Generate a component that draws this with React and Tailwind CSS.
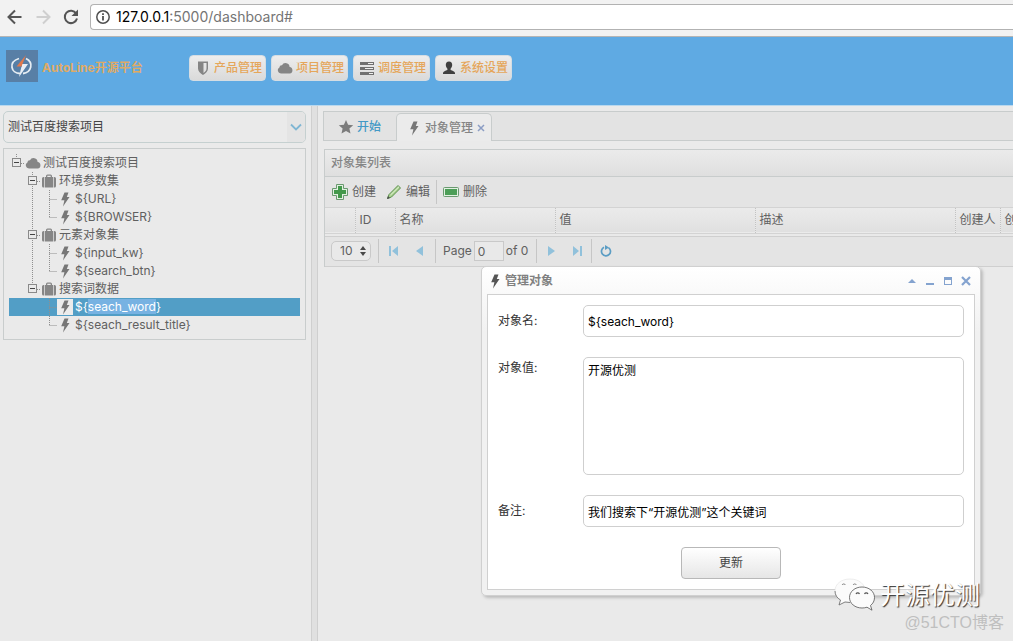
import React, { useState } from "react";

const BOLT = "M7.5 1.500h4L9.800 6H12.500L6 15.500l1.400-6.300H4.200Z";

const Bolt = ({ className = "" }) => (
  <svg viewBox="0 0 16 16" className={`size-4 shrink-0 ${className}`}>
    <path d={BOLT} fill="currentColor" />
  </svg>
);

const Cloud = ({ className = "" }) => (
  <svg viewBox="0 0 16 16" className={`size-4 shrink-0 ${className}`}>
    <path
      d="M4 13.5a3.2 3.2 0 0 1-1.6-6A2.4 2.4 0 0 1 5 5.3 4 4 0 0 1 12.6 7a3.3 3.3 0 0 1 .2 6.5Z"
      fill="currentColor"
    />
  </svg>
);

const Briefcase = () => (
  <svg viewBox="0 0 16 16" className="size-4 shrink-0 text-[#868686]">
    <path
      d="M4 4h1V3a1.500 1.500 0 0 1 1.500-1.500h3A1.500 1.500 0 0 1 11 3v1h1v10.500H4Zm2.300 0h3.400V2.800H6.300ZM3.300 4v10.500H2.500A1.500 1.500 0 0 1 1 13V5.500A1.500 1.500 0 0 1 2.500 4ZM12.700 4h.8A1.500 1.500 0 0 1 15 5.500V13a1.500 1.500 0 0 1-1.500 1.500h-.8Z"
      fill="currentColor"
      fillRule="evenodd"
    />
  </svg>
);

const Shield = () => (
  <svg viewBox="0 0 16 16" className="size-4 shrink-0 text-[#858585]">
    <path
      d="M3 1.500h10v7c0 3-2.500 5-5 6.500-2.500-1.500-5-3.500-5-6.500ZM8.500 3v10c1.800-1.200 3-2.500 3-4.500V3Z"
      fill="currentColor"
      fillRule="evenodd"
    />
  </svg>
);

const Tasks = () => (
  <svg viewBox="0 0 16 16" className="size-4 shrink-0">
    <path d="M1 2h14v3H1ZM1 7h14v3H1ZM1 12h14v3H1Z" fill="#707070" />
    <path d="M9 3h5v1H9ZM6 8h8v1H6ZM10 13h4v1h-4Z" fill="#ededed" />
  </svg>
);

const User = () => (
  <svg viewBox="0 0 16 16" className="size-4 shrink-0 text-[#404040]">
    <path
      d="M8 1.500c2.200 0 3.300 1.500 3.200 3.600C11.100 7 10.300 8 9.600 8.800v1.300c1.800.8 4.400 1.300 4.400 3V14H2v-.9c0-1.700 2.600-2.200 4.400-3V8.800C5.700 8 4.900 7 4.800 5.100 4.700 3 5.800 1.500 8 1.500Z"
      fill="currentColor"
    />
  </svg>
);

const Star = () => (
  <svg viewBox="0 0 16 16" className="size-4 shrink-0 text-[#7c7c7c]">
    <path
      d="m8 1 2.100 4.700 5.100.5-3.800 3.400 1.100 5L8 12l-4.500 2.600 1.100-5L.8 6.200l5.100-.5Z"
      fill="currentColor"
    />
  </svg>
);

const navItems = [
  { label: "产品管理", icon: <Shield /> },
  { label: "项目管理", icon: <Cloud className="text-[#858585]" /> },
  { label: "调度管理", icon: <Tasks /> },
  { label: "系统设置", icon: <User /> },
];

const treeGroups = [
  { name: "环境参数集", items: ["URL", "BROWSER"] },
  { name: "元素对象集", items: ["input_kw", "search_btn"] },
  { name: "搜索词数据", items: ["seach_word", "seach_result_title"] },
];

// dotted connector lines of the tree, one 16x18 cell per level
const cellPaths = {
  blank: "",
  line: "M7.5 0V18",
  join: "M8.5 0V18M8.5 9.5H16",
  end: "M8.5 0V9.5M8.5 9.5H16",
};

const TreeCell = ({ type }) => (
  <svg viewBox="0 0 16 18" className="h-[18px] w-4 shrink-0">
    <path d={cellPaths[type]} stroke="#8f8f8f" strokeDasharray="1 1" fill="none" />
  </svg>
);

const TreeHit = ({ below }) => (
  <svg viewBox="0 0 16 18" className="h-[18px] w-4 shrink-0">
    <path
      d={below ? "M7.5 0V4M7.5 14V18M12 9.5H16" : "M7.5 0V4M12 9.5H16"}
      stroke="#8f8f8f"
      strokeDasharray="1 1"
    />
    <rect x="3.5" y="4.5" width="8" height="8" fill="none" stroke="#8a8a8a" />
    <path d="M5 8.500h5" stroke="#444" />
  </svg>
);

const AddressBar = () => (
  <div className="flex h-[37px] items-center border-b border-[#b5b5b5] bg-[#f2f2f2] pb-0.5">
    <button aria-label="Back" className="ml-1.5 text-[#555]">
      <svg viewBox="0 0 18 18" className="size-[18px]">
        <path d="M15.500 9H2.500M9 2.500 2.500 9 9 15.500" fill="none" stroke="currentColor" strokeWidth="2" />
      </svg>
    </button>
    <button aria-label="Forward" className="ml-2.5 text-[#cfcfcf]">
      <svg viewBox="0 0 18 18" className="size-[18px]">
        <path d="M2.500 9h13M9 2.500 15.500 9 9 15.500" fill="none" stroke="currentColor" strokeWidth="2" />
      </svg>
    </button>
    <button aria-label="Reload" className="ml-2.5 text-[#555]">
      <svg viewBox="0 0 18 18" className="size-[18px]">
        <path d="M14.200 5.500A6.200 6.200 0 1 0 15 10.500" fill="none" stroke="currentColor" strokeWidth="2" />
        <path d="M16 1.500V8H9.500Z" fill="currentColor" />
      </svg>
    </button>
    <div className="ml-2.5 flex h-[26px] flex-1 items-center rounded-l border border-r-0 border-[#b2b2b2] bg-white pl-1">
      <svg viewBox="0 0 16 16" className="size-4">
        <circle cx="8" cy="8" r="6.200" fill="none" stroke="#505050" strokeWidth="1.500" />
        <path d="M8 7v4.500M8 4.200v1.700" stroke="#505050" strokeWidth="1.800" />
      </svg>
      <span className="ml-[5px] text-sm text-[#757575]">
        <span className="text-black">127.0.0.1</span>:5000/dashboard#
      </span>
    </div>
  </div>
);

const Header = () => (
  <header className="flex h-[69px] items-start border-b border-[#b9d8ee] bg-[#5faae3] pl-1.5">
    <div className="mt-[13px] flex h-8 w-[183px] items-center">
      <svg viewBox="0 0 32 32" className="size-8">
        <rect width="32" height="32" fill="#587fa6" />
        <path d="M13 8.500C2 12 5 23.500 14 23.500M20 8.500c8 4 5.500 14-3 15" fill="none" stroke="#e6edf3" strokeWidth="1.800" />
        <path d="M16 12.500v4h-5 4.500L13 27l9-13h-6Z" fill="#e8eef5" />
        <path d="M20 5 10.500 16.500h5L20 5Z" fill="#e0794d" />
      </svg>
      <span className="ml-1 pt-1 text-xs font-bold text-[#dfaa65]">AutoLine开源平台</span>
    </div>
    <nav className="mt-[18px] flex gap-[5px]">
      {navItems.map((item) => (
        <button
          key={item.label}
          className="flex h-[26px] w-[77px] items-center gap-[3px] rounded border border-[#d5dde3] bg-gradient-to-b from-[#ededed] to-[#dadada] pl-[5px] text-xs font-medium whitespace-nowrap text-[#e5a65a]"
        >
          {item.icon}
          {item.label}
        </button>
      ))}
    </nav>
  </header>
);

const Sidebar = () => {
  const [selected, setSelected] = useState("seach_word");

  return (
    <aside className="w-[311px] shrink-0 pt-[5px] pr-[5px] pl-[3px]">
      <div className="grid h-8 rounded-[5px] border border-[#c5d0d0]">
        <select
          aria-label="项目"
          className="col-start-1 row-start-1 appearance-none pl-1 text-xs text-[#444] outline-none"
        >
          <option>测试百度搜索项目</option>
        </select>
        <div className="pointer-events-none col-start-1 row-start-1 flex w-[18px] items-center justify-center justify-self-end rounded-r bg-[#e4e4e4]">
          <svg viewBox="0 0 12 8" className="h-2 w-3">
            <path d="m1 1.500 5 5 5-5" fill="none" stroke="#7fb6d3" strokeWidth="1.800" />
          </svg>
        </div>
      </div>

      <ul className="mt-[5px] border border-[#c9cdcd] p-[5px] text-xs text-[#606060]">
        <li>
          <div className="flex h-[18px] items-center">
            <TreeHit />
            <Cloud className="text-[#868686]" />
            <span className="ml-0.5">测试百度搜索项目</span>
          </div>
          <ul>
            {treeGroups.map((group, g) => {
              const lastGroup = g === treeGroups.length - 1;
              return (
                <li key={group.name}>
                  <div className="flex h-[18px] items-center">
                    <TreeCell type="blank" />
                    <TreeHit below={!lastGroup} />
                    <Briefcase />
                    <span className="ml-0.5">{group.name}</span>
                  </div>
                  <ul>
                    {group.items.map((item, i) => {
                      const active = item === selected;
                      return (
                        <li
                          key={item}
                          onClick={() => setSelected(item)}
                          className={`flex h-[18px] items-center ${
                            active ? "bg-[#529ec6] text-white" : ""
                          }`}
                        >
                          <TreeCell type="blank" />
                          <TreeCell type={lastGroup ? "blank" : "line"} />
                          <TreeCell type={i === group.items.length - 1 ? "end" : "join"} />
                          <Bolt className={active ? "bg-[#ececec] text-[#777]" : "text-[#777]"} />
                          <span className="ml-0.5">
                            {"${"}
                            <span className={active ? "bg-[#77b2e2]" : ""}>{item}</span>
                            {"}"}
                          </span>
                        </li>
                      );
                    })}
                  </ul>
                </li>
              );
            })}
          </ul>
        </li>
      </ul>
    </aside>
  );
};

const Tabs = () => (
  <div className="flex h-[30px] items-end border border-r-0 border-[#c8cccc] bg-[#e3e3e3] text-xs font-medium">
    <button className="flex h-[27px] w-[72px] items-center gap-[3px] pl-3.5 text-[#4399c6]">
      <Star />
      开始
    </button>
    <div className="-mb-px flex h-[28px] w-[96px] items-center rounded-t-[5px] border border-b-0 border-[#c8cccc] bg-[#ebebeb] pl-[9px] text-[#858585]">
      <Bolt className="text-[#777]" />
      <button className="ml-[3px] whitespace-nowrap">对象管理</button>
      <button aria-label="关闭" className="ml-1">
        <svg viewBox="0 0 8 8" className="size-2">
          <path d="m1 1 6 6M7 1 1 7" stroke="#8b9dc4" strokeWidth="1.500" />
        </svg>
      </button>
    </div>
  </div>
);

const Toolbar = () => (
  <div className="flex h-[31px] items-center border-b border-[#d3d3d3] bg-[#e4e4e4] pl-[7px] text-xs text-[#606060]">
    <button className="flex items-center gap-1">
      <svg viewBox="0 0 16 16" className="size-4">
        <path
          d="M4.500.5h7v4h4v7h-4v4h-7v-4h-4v-7h4Z"
          fill="#e2f0e2"
          stroke="#6a9a70"
          strokeLinejoin="round"
        />
        <path d="M6 2h4v4h4v4h-4v4H6v-4H2V6h4Z" fill="#43994b" />
      </svg>
      创建
    </button>
    <button className="ml-2.5 flex items-center gap-1">
      <svg viewBox="0 0 16 16" className="size-4">
        <path d="M1.500 14.500 3 10.500 12 1.500l2.500 2.500L5.500 13Z" fill="#a9d18e" stroke="#5d8f50" />
        <path d="M4.500 11 13 2.700" stroke="#e6f3dc" />
        <path d="m1 15 1-3 2 2Z" fill="#4d4d4d" />
      </svg>
      编辑
    </button>
    <span className="mx-1.5 h-6 border-l border-[#c6c6c6]" />
    <button className="flex items-center gap-1">
      <svg viewBox="0 0 16 16" className="size-4">
        <rect x=".5" y="3.500" width="15" height="9" rx="1" fill="#e2f0e2" stroke="#6a9a70" />
        <rect x="2" y="5" width="12" height="6" fill="#4c9e57" />
      </svg>
      删除
    </button>
  </div>
);

const columns = [
  { label: "", width: "w-[30px]" },
  { label: "ID", width: "w-10" },
  { label: "名称", width: "w-40" },
  { label: "值", width: "w-[200px]" },
  { label: "描述", width: "w-[200px]" },
  { label: "创建人", width: "w-[45px]" },
  { label: "创建时间", width: "w-[120px]" },
];

const PageButton = ({ label, d, className = "" }) => (
  <button aria-label={label} className={className}>
    <svg viewBox="0 0 12 12" className="size-3">
      <path d={d} fill="#91c1db" />
    </svg>
  </button>
);

const Pager = () => (
  <div className="flex h-[31px] items-center border-y border-[#cfcfcf] bg-[#e4e4e4] pl-1.5 text-xs text-[#606060]">
    <div className="grid h-5 w-10 items-center rounded-[5px] border border-[#c9c9c9] bg-[#e9e9e9]">
      <select aria-label="每页条数" className="col-start-1 row-start-1 appearance-none pl-2 outline-none">
        <option>10</option>
      </select>
      <svg viewBox="0 0 6 12" className="pointer-events-none col-start-1 row-start-1 mr-1 h-3 w-1.5 justify-self-end">
        <path d="M3 1 6 5H0ZM3 11 0 7h6Z" fill="#484848" />
      </svg>
    </div>
    <span className="ml-[7px] h-6 border-l border-[#c6c6c6]" />
    <PageButton label="首页" d="M2 1h2v10H2ZM11 1v10L5 6Z" className="ml-2" />
    <PageButton label="上一页" d="M10 1v10L3 6Z" className="ml-3.5" />
    <span className="ml-2.5 h-6 border-l border-[#c6c6c6]" />
    <label className="ml-[7px] flex items-center gap-0.5">
      Page
      <input
        defaultValue="0"
        className="h-5 w-[30px] border border-[#c9c9c9] bg-[#e9e9e9] pl-[3px] outline-none"
      />
    </label>
    <span className="ml-0.5">of 0</span>
    <span className="ml-2 h-6 border-l border-[#c6c6c6]" />
    <PageButton label="下一页" d="M3 1v10l7-5Z" className="ml-2" />
    <PageButton label="末页" d="M2 1v10l6-5ZM9 1h2v10H9Z" className="ml-3.5" />
    <span className="ml-2 h-6 border-l border-[#c6c6c6]" />
    <button aria-label="刷新" className="ml-2">
      <svg viewBox="0 0 12 12" className="size-3">
        <path d="M4 2.300A4.500 4.500 0 1 0 8.500 2.600" fill="none" stroke="#5b9dc4" strokeWidth="1.700" />
        <path d="M5 0v5l4-2.500Z" fill="#5b9dc4" />
      </svg>
    </button>
  </div>
);

const ObjectGrid = () => (
  <section className="mt-2 ml-px overflow-hidden border-t border-l border-[#c8cccc]">
    <h2 className="flex h-[27px] items-center border-b border-[#c8cccc] bg-gradient-to-b from-[#ebebeb] to-[#dfdfdf] pl-1.5 text-xs font-medium text-[#858585]">
      对象集列表
    </h2>
    <Toolbar />
    <div className="overflow-hidden bg-[#e9e9e9] pb-0.5">
      <table className="w-[795px] table-fixed border-collapse text-xs text-[#606060]">
        <thead>
          <tr className="h-[25px] border-b border-[#d3d3d3] bg-gradient-to-b from-[#ebebeb] to-[#e0e0e0]">
            {columns.map((col, i) => (
              <th
                key={i}
                className={`${col.width} overflow-hidden border-r border-dotted border-[#c2c2c2] p-0 pl-1 text-left font-normal whitespace-nowrap`}
              >
                {col.label}
              </th>
            ))}
          </tr>
        </thead>
      </table>
    </div>
    <Pager />
  </section>
);

const fieldClass =
  "w-full rounded-[5px] border border-[#cfcfcf] bg-white px-1 text-xs text-black outline-none";

const ObjectDialog = () => {
  const [formData, setFormData] = useState({
    name: "${seach_word}",
    value: "开源优测",
    remark: "我们搜索下“开源优测”这个关键词",
  });

  const handleChange = (e) => {
    setFormData((prev) => ({ ...prev, [e.target.name]: e.target.value }));
  };

  return (
    <div
      role="dialog"
      aria-label="管理对象"
      className="absolute top-[266px] left-[481px] w-[500px] rounded-[5px] border border-[#d0d0d0] bg-gradient-to-b from-white to-[#f1f1f1] to-20% px-[5px] pb-[5px] shadow-[2px_2px_3px_#bdbdbd]"
    >
      <div className="flex h-[27px] items-center text-xs font-bold text-[#808080]">
        <Bolt className="text-[#555]" />
        <span className="ml-0.5 flex-1">管理对象</span>
        <div className="mr-[3px] flex gap-1.5">
          <button aria-label="折叠">
            <svg viewBox="0 0 12 12" className="size-3">
              <path d="M2 8 6 4l4 4Z" fill="#84a3cf" />
            </svg>
          </button>
          <button aria-label="最小化">
            <svg viewBox="0 0 12 12" className="size-3">
              <path d="M2 8h8v2H2Z" fill="#84a3cf" />
            </svg>
          </button>
          <button aria-label="最大化">
            <svg viewBox="0 0 12 12" className="size-3">
              <path d="M2 2h8v8H2ZM3 5v4h6V5Z" fill="#84a3cf" fillRule="evenodd" />
            </svg>
          </button>
          <button aria-label="关闭">
            <svg viewBox="0 0 12 12" className="size-3">
              <path d="m2 2 8 8M10 2l-8 8" stroke="#84a3cf" strokeWidth="2.200" />
            </svg>
          </button>
        </div>
      </div>

      <form
        onSubmit={(e) => e.preventDefault()}
        className="flex flex-col gap-5 border border-[#d0d0d0] bg-white p-2.5 text-xs text-[#333]"
      >
        <div className="grid grid-cols-[85px_1fr] items-center">
          <label htmlFor="name">对象名:</label>
          <input id="name" name="name" value={formData.name} onChange={handleChange} className={`${fieldClass} h-8`} />
        </div>
        <div className="grid grid-cols-[85px_1fr] items-start">
          <label htmlFor="value" className="pt-[3px]">对象值:</label>
          <textarea
            id="value"
            name="value"
            value={formData.value}
            onChange={handleChange}
            className={`${fieldClass} block h-[118px] resize-none pt-[5px]`}
          />
        </div>
        <div className="grid grid-cols-[85px_1fr] items-center">
          <label htmlFor="remark">备注:</label>
          <input id="remark" name="remark" value={formData.remark} onChange={handleChange} className={`${fieldClass} h-8`} />
        </div>
        <button
          type="submit"
          className="h-8 w-[100px] self-center rounded border border-[#b8b8b8] bg-gradient-to-b from-white to-[#e6e6e6] text-[#444]"
        >
          更新
        </button>
      </form>
    </div>
  );
};

const Watermark = () => (
  <div className="pointer-events-none absolute right-[9px] bottom-2 flex flex-col items-end">
    <div className="mr-6 flex items-center gap-1">
      <svg viewBox="0 0 42 36" className="h-9 w-[42px]">
        <path
          d="M16 2C7 2 1 7 1 14c0 4 2 7 5.500 9L5 28l6-3c8 2 20-1 20-11C31 7 25 2 16 2Z"
          fill="#fbfbfb"
          stroke="#dcdcdc"
          strokeWidth=".5"
        />
        <path d="M1 14c0 4 2 7 5.500 9L5 28l6-3 5 .5M8 8a2 2 0 0 1 3.500 0M19 8a2 2 0 0 1 3.500 0" fill="none" stroke="#666" strokeWidth=".8" />
        <path
          d="M28 10c-7 0-12.500 4.500-12.500 10.500S21 31 28 31c2 0 3.500-.3 5-.8l5 3-1.500-4.700c2.500-2 4-4.500 4-8C40.500 14.500 35 10 28 10Z"
          fill="#fbfbfb"
          stroke="#555"
          strokeWidth=".8"
        />
        <path d="M22 17a2 2 0 0 1 3.500 0M30.500 17a2 2 0 0 1 3.500 0" fill="none" stroke="#555" strokeWidth="1.200" />
      </svg>
      <span className="text-[25px] leading-9 text-white [text-shadow:1px_1px_1px_#333]">开源优测</span>
    </div>
    <span className="font-['Liberation_Sans','Noto_Sans_CJK_SC',sans-serif] text-base leading-5 text-[#bfbfbf]">
      @51CTO博客
    </span>
  </div>
);

const App = () => (
  <div className="relative flex min-h-screen flex-col overflow-hidden bg-[#eaeaea] font-[Inter,'Noto_Sans_CJK_SC',sans-serif]">
    <AddressBar />
    <Header />
    <div className="flex flex-1">
      <Sidebar />
      <div className="w-[7px] shrink-0 border-x border-[#cfcfcf] bg-[#e0e0e0]" />
      <main className="min-w-0 flex-1 pt-[5px] pl-[5px]">
        <Tabs />
        <ObjectGrid />
      </main>
    </div>
    <ObjectDialog />
    <Watermark />
  </div>
);

export default App;
